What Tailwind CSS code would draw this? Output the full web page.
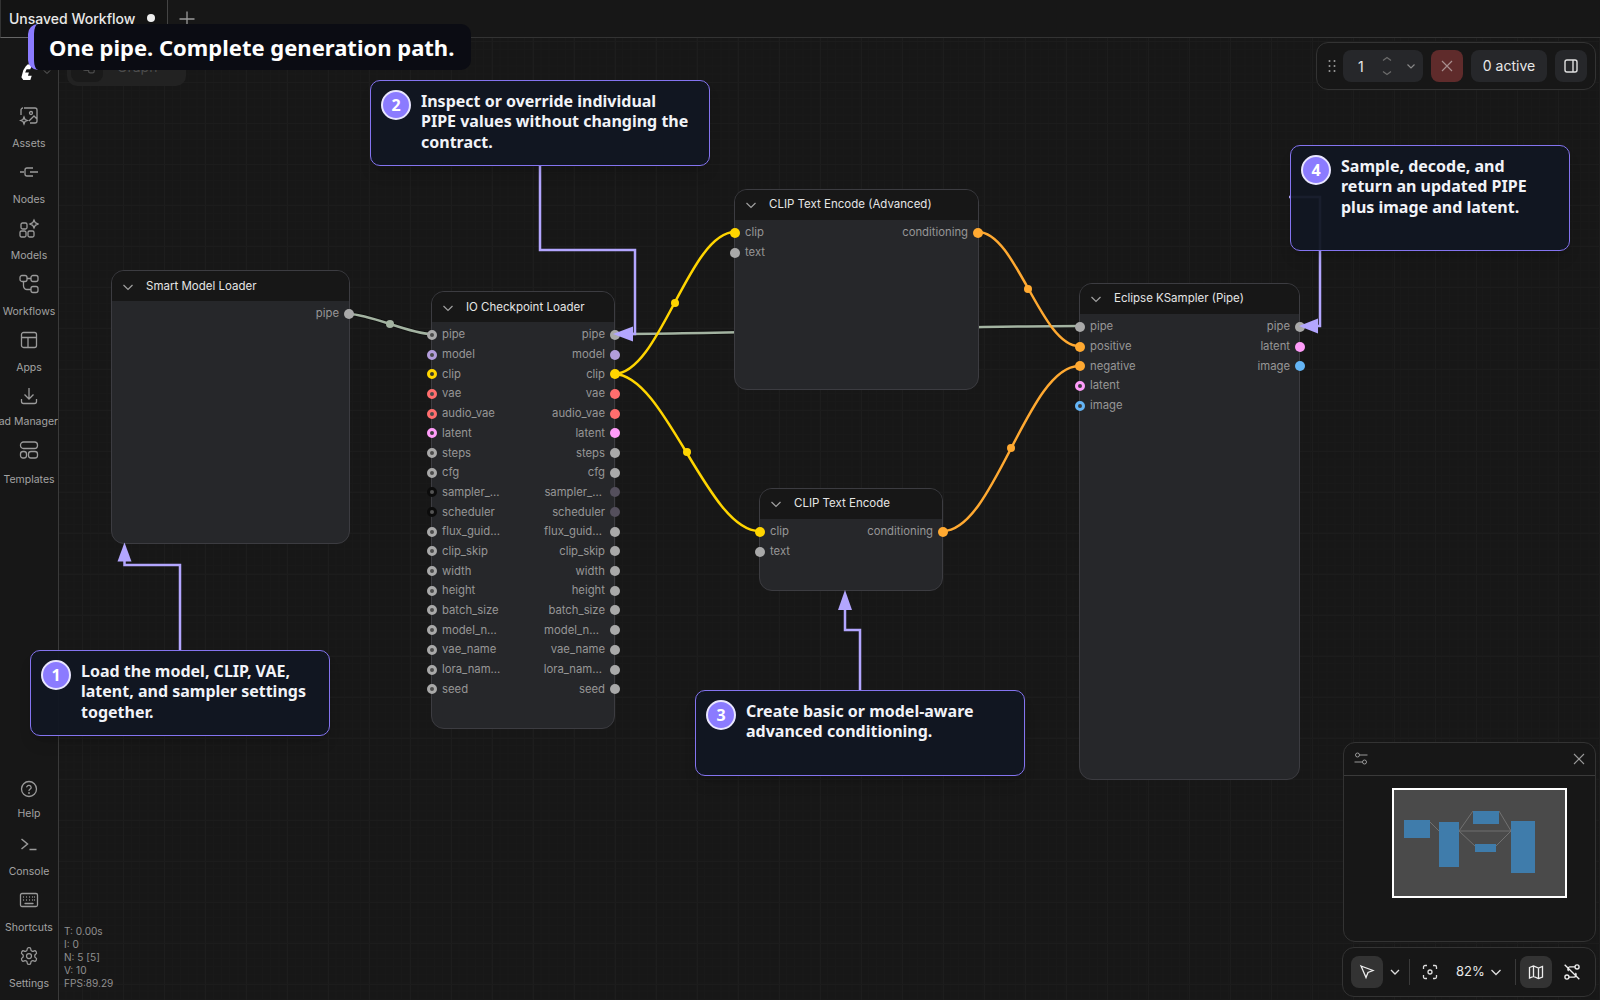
<!DOCTYPE html>
<html lang="en">
<head>
<meta charset="utf-8">
<title>Unsaved Workflow</title>
<script src="https://cdn.jsdelivr.net/npm/@tailwindcss/browser@4"></script>
</head>
<body class="bg-[#171717]">
<div class="relative w-[1600px] h-[1000px] overflow-hidden flex flex-col font-[Inter,sans-serif] text-[#a3a3a3]">

  <!-- canvas: free placement of nodes -->
  <div class="absolute inset-0 bg-[#171717] bg-[linear-gradient(#1c1c1c_1px,transparent_1px),linear-gradient(90deg,#1d1d1d_1px,transparent_1px),linear-gradient(#191919_1px,transparent_1px),linear-gradient(90deg,#191919_1px,transparent_1px)] bg-size-[41px_41px,41px_41px,8.2px_8.2px,8.2px_8.2px]">

    <!-- links -->
    <svg class="absolute inset-0" width="1600" height="1000" fill="none">
      <g stroke="#0b0b0b" stroke-width="4.5" opacity=".6">
        <path d="M349 314C370 314 410 334 431 334"/>
        <path d="M614 334C730 334 963 326 1079 326"/>
      </g>
      <g stroke="#a3b3a1" stroke-width="2.5">
        <path d="M349 314C370 314 410 334 431 334"/>
        <path d="M614 334C730 334 963 326 1079 326"/>
      </g>
      <circle cx="390" cy="324" r="4" fill="#a3b3a1"/>
      <g stroke="#ffd500" stroke-width="2.5">
        <path d="M614 374C660 374 689 232 735 232"/>
        <path d="M614 374C665 374 708 531 759 531"/>
      </g>
      <circle cx="675" cy="303" r="4" fill="#ffd500"/>
      <circle cx="687" cy="452" r="4" fill="#ffd500"/>
      <g stroke="#ffa931" stroke-width="2.5">
        <path d="M978 232C1016 232 1041 346 1079 346"/>
        <path d="M943 531C994 531 1028 366 1079 366"/>
      </g>
      <circle cx="1028" cy="289" r="4" fill="#ffa931"/>
      <circle cx="1011" cy="448" r="4" fill="#ffa931"/>
    </svg>

    <!-- Smart Model Loader -->
    <section class="absolute left-[111px] top-[270px] w-[239px] h-[274px] rounded-[13px] border border-[#3c3c41] bg-[#26272a]">
      <header class="h-[30px] flex items-center gap-[12px] pl-[10px] pt-[1px] rounded-t-[12px] bg-[#171717] text-[11.5px] text-[#e5e5e5]">
        <svg class="size-[12px] text-[#a0a0a0]" viewBox="0 0 12 12" fill="none" stroke="currentColor" stroke-width="1.2"><path d="M1.5 4l4.5 4.5L10.500 4"/></svg>Smart Model Loader</header>
      <div class="pt-[3px] -mx-[5px] text-[11.300px] text-[#969696]">
        <div class="h-[19.700px] flex items-center justify-end gap-[5px]">pipe<i class="size-[10px] rounded-full bg-[#a9a9a9]"></i></div>
      </div>
    </section>

    <!-- IO Checkpoint Loader -->
    <section class="absolute left-[431px] top-[291px] w-[184px] h-[438px] rounded-[13px] border border-[#3c3c41] bg-[#26272a]">
      <header class="h-[30px] flex items-center gap-[12px] pl-[10px] pt-[1px] rounded-t-[12px] bg-[#171717] text-[11.5px] text-[#e5e5e5]">
        <svg class="size-[12px] text-[#a0a0a0]" viewBox="0 0 12 12" fill="none" stroke="currentColor" stroke-width="1.2"><path d="M1.5 4l4.5 4.5L10.500 4"/></svg>IO Checkpoint Loader</header>
      <div class="pt-[3px] -ml-[5px] -mr-[6px] text-[11.300px] text-[#969696]">
        <div class="h-[19.700px] flex items-center gap-[5px]"><i class="size-[10px] rounded-full border-[3px] border-[#a9a9a9] bg-[#4c4c4c]"></i>pipe<span class="ml-auto">pipe</span><i class="size-[10px] rounded-full bg-[#a9a9a9]"></i></div>
        <div class="h-[19.700px] flex items-center gap-[5px]"><i class="size-[10px] rounded-full border-[3px] border-[#b39ddb] bg-[#4c4c4c]"></i>model<span class="ml-auto">model</span><i class="size-[10px] rounded-full bg-[#b39ddb]"></i></div>
        <div class="h-[19.700px] flex items-center gap-[5px]"><i class="size-[10px] rounded-full border-[3px] border-[#ffd500] bg-[#3a3a2a]"></i>clip<span class="ml-auto">clip</span><i class="size-[10px] rounded-full bg-[#ffd500]"></i></div>
        <div class="h-[19.700px] flex items-center gap-[5px]"><i class="size-[10px] rounded-full border-[3px] border-[#ff6e6e] bg-[#4c4c4c]"></i>vae<span class="ml-auto">vae</span><i class="size-[10px] rounded-full bg-[#ff6e6e]"></i></div>
        <div class="h-[19.700px] flex items-center gap-[5px]"><i class="size-[10px] rounded-full border-[3px] border-[#ff6e6e] bg-[#4c4c4c]"></i>audio_vae<span class="ml-auto">audio_vae</span><i class="size-[10px] rounded-full bg-[#ff6e6e]"></i></div>
        <div class="h-[19.700px] flex items-center gap-[5px]"><i class="size-[10px] rounded-full border-[3px] border-[#ff9cf9] bg-[#3c3c3c]"></i>latent<span class="ml-auto">latent</span><i class="size-[10px] rounded-full bg-[#ff9cf9]"></i></div>
        <div class="h-[19.700px] flex items-center gap-[5px]"><i class="size-[10px] rounded-full border-[3px] border-[#a9a9a9] bg-[#4c4c4c]"></i>steps<span class="ml-auto">steps</span><i class="size-[10px] rounded-full bg-[#a9a9a9]"></i></div>
        <div class="h-[19.700px] flex items-center gap-[5px]"><i class="size-[10px] rounded-full border-[3px] border-[#a9a9a9] bg-[#4c4c4c]"></i>cfg<span class="ml-auto">cfg</span><i class="size-[10px] rounded-full bg-[#a9a9a9]"></i></div>
        <div class="h-[19.700px] flex items-center gap-[5px]"><i class="size-[10px] rounded-full border-[3px] border-[#0c0c0c] bg-[#555]"></i>sampler_...<span class="ml-auto pr-[3px]">sampler_...</span><i class="size-[10px] rounded-full bg-[#544f5c]"></i></div>
        <div class="h-[19.700px] flex items-center gap-[5px]"><i class="size-[10px] rounded-full border-[3px] border-[#0c0c0c] bg-[#555]"></i>scheduler<span class="ml-auto">scheduler</span><i class="size-[10px] rounded-full bg-[#544f5c]"></i></div>
        <div class="h-[19.700px] flex items-center gap-[5px]"><i class="size-[10px] rounded-full border-[3px] border-[#a9a9a9] bg-[#4c4c4c]"></i>flux_guid...<span class="ml-auto pr-[3px]">flux_guid...</span><i class="size-[10px] rounded-full bg-[#a9a9a9]"></i></div>
        <div class="h-[19.700px] flex items-center gap-[5px]"><i class="size-[10px] rounded-full border-[3px] border-[#a9a9a9] bg-[#4c4c4c]"></i>clip_skip<span class="ml-auto">clip_skip</span><i class="size-[10px] rounded-full bg-[#a9a9a9]"></i></div>
        <div class="h-[19.700px] flex items-center gap-[5px]"><i class="size-[10px] rounded-full border-[3px] border-[#a9a9a9] bg-[#4c4c4c]"></i>width<span class="ml-auto">width</span><i class="size-[10px] rounded-full bg-[#a9a9a9]"></i></div>
        <div class="h-[19.700px] flex items-center gap-[5px]"><i class="size-[10px] rounded-full border-[3px] border-[#a9a9a9] bg-[#4c4c4c]"></i>height<span class="ml-auto">height</span><i class="size-[10px] rounded-full bg-[#a9a9a9]"></i></div>
        <div class="h-[19.700px] flex items-center gap-[5px]"><i class="size-[10px] rounded-full border-[3px] border-[#a9a9a9] bg-[#4c4c4c]"></i>batch_size<span class="ml-auto">batch_size</span><i class="size-[10px] rounded-full bg-[#a9a9a9]"></i></div>
        <div class="h-[19.700px] flex items-center gap-[5px]"><i class="size-[10px] rounded-full border-[3px] border-[#a9a9a9] bg-[#4c4c4c]"></i>model_n...<span class="ml-auto pr-[6px]">model_n...</span><i class="size-[10px] rounded-full bg-[#a9a9a9]"></i></div>
        <div class="h-[19.700px] flex items-center gap-[5px]"><i class="size-[10px] rounded-full border-[3px] border-[#a9a9a9] bg-[#4c4c4c]"></i>vae_name<span class="ml-auto">vae_name</span><i class="size-[10px] rounded-full bg-[#a9a9a9]"></i></div>
        <div class="h-[19.700px] flex items-center gap-[5px]"><i class="size-[10px] rounded-full border-[3px] border-[#a9a9a9] bg-[#4c4c4c]"></i>lora_nam...<span class="ml-auto pr-[3px]">lora_nam...</span><i class="size-[10px] rounded-full bg-[#a9a9a9]"></i></div>
        <div class="h-[19.700px] flex items-center gap-[5px]"><i class="size-[10px] rounded-full border-[3px] border-[#a9a9a9] bg-[#4c4c4c]"></i>seed<span class="ml-auto">seed</span><i class="size-[10px] rounded-full bg-[#a9a9a9]"></i></div>
      </div>
    </section>

    <!-- CLIP Text Encode (Advanced) -->
    <section class="absolute left-[734px] top-[189px] w-[245px] h-[201px] rounded-[13px] border border-[#3c3c41] bg-[#26272a]">
      <header class="h-[30px] flex items-center gap-[12px] pl-[10px] rounded-t-[12px] bg-[#171717] text-[11.5px] text-[#e5e5e5]">
        <svg class="size-[12px] text-[#a0a0a0]" viewBox="0 0 12 12" fill="none" stroke="currentColor" stroke-width="1.2"><path d="M1.5 4l4.5 4.5L10.500 4"/></svg>CLIP Text Encode (Advanced)</header>
      <div class="pt-[3px] -mx-[5px] text-[11.300px] text-[#969696]">
        <div class="h-[19.700px] flex items-center gap-[5px]"><i class="size-[10px] rounded-full bg-[#ffd500]"></i>clip<span class="ml-auto">conditioning</span><i class="size-[10px] rounded-full bg-[#ffa931]"></i></div>
        <div class="h-[19.700px] flex items-center gap-[5px]"><i class="size-[10px] rounded-full bg-[#a9a9a9]"></i>text</div>
      </div>
    </section>

    <!-- CLIP Text Encode -->
    <section class="absolute left-[759px] top-[488px] w-[184px] h-[103px] rounded-[13px] border border-[#3c3c41] bg-[#26272a]">
      <header class="h-[30px] flex items-center gap-[12px] pl-[10px] rounded-t-[12px] bg-[#171717] text-[11.5px] text-[#e5e5e5]">
        <svg class="size-[12px] text-[#a0a0a0]" viewBox="0 0 12 12" fill="none" stroke="currentColor" stroke-width="1.2"><path d="M1.5 4l4.5 4.5L10.500 4"/></svg>CLIP Text Encode</header>
      <div class="pt-[3px] -ml-[5px] -mr-[6px] text-[11.300px] text-[#969696]">
        <div class="h-[19.700px] flex items-center gap-[5px]"><i class="size-[10px] rounded-full bg-[#ffd500]"></i>clip<span class="ml-auto">conditioning</span><i class="size-[10px] rounded-full bg-[#ffa931]"></i></div>
        <div class="h-[19.700px] flex items-center gap-[5px]"><i class="size-[10px] rounded-full bg-[#a9a9a9]"></i>text</div>
      </div>
    </section>

    <!-- Eclipse KSampler (Pipe) -->
    <section class="absolute left-[1079px] top-[283px] w-[221px] h-[497px] rounded-[13px] border border-[#3c3c41] bg-[#26272a]">
      <header class="h-[30px] flex items-center gap-[12px] pl-[10px] rounded-t-[12px] bg-[#171717] text-[11.5px] text-[#e5e5e5]">
        <svg class="size-[12px] text-[#a0a0a0]" viewBox="0 0 12 12" fill="none" stroke="currentColor" stroke-width="1.2"><path d="M1.5 4l4.5 4.5L10.500 4"/></svg>Eclipse KSampler (Pipe)</header>
      <div class="pt-[3px] -ml-[5px] -mr-[6px] text-[11.300px] text-[#969696]">
        <div class="h-[19.700px] flex items-center gap-[5px]"><i class="size-[10px] rounded-full bg-[#a9a9a9]"></i>pipe<span class="ml-auto">pipe</span><i class="size-[10px] rounded-full bg-[#a9a9a9]"></i></div>
        <div class="h-[19.700px] flex items-center gap-[5px]"><i class="size-[10px] rounded-full bg-[#ffa931]"></i>positive<span class="ml-auto">latent</span><i class="size-[10px] rounded-full bg-[#ff9cf9]"></i></div>
        <div class="h-[19.700px] flex items-center gap-[5px]"><i class="size-[10px] rounded-full bg-[#ffa931]"></i>negative<span class="ml-auto">image</span><i class="size-[10px] rounded-full bg-[#64b5f6]"></i></div>
        <div class="h-[19.700px] flex items-center gap-[5px]"><i class="size-[10px] rounded-full border-[3px] border-[#ff9cf9] bg-[#3c3c3c]"></i>latent</div>
        <div class="h-[19.700px] flex items-center gap-[5px]"><i class="size-[10px] rounded-full border-[3px] border-[#64b5f6] bg-[#3c3c3c]"></i>image</div>
      </div>
    </section>

    <!-- callout arrows -->
    <svg class="absolute inset-0" width="1600" height="1000" fill="none">
      <g stroke="#b3a6ff" stroke-width="2.5">
        <path d="M180 650V565H124.500V555"/>
        <path d="M540 165V250H635V334H625"/>
        <path d="M860 690V630H845V605"/>
        <path d="M1289 197H1320V326H1310"/>
      </g>
      <g fill="#b3a6ff">
        <path d="M124.500 542.500l7 19h-14z"/>
        <path d="M613 334l20-7.500v15z"/>
        <path d="M845 590l7 20h-14z"/>
        <path d="M1299 326l19-7.500v15z"/>
      </g>
    </svg>
  </div>

  <!-- tab bar -->
  <nav class="relative h-[38px] shrink-0 flex items-center border-b border-[#333] bg-[#171717]">
    <div class="h-[38px] w-[168px] flex items-center pl-[8px] border-x border-b border-r-[#444] border-l-[#333] border-b-[#666] bg-[#141414] text-[14px] font-medium text-[#e8e8e8]">
      <span>Unsaved Workflow</span><i class="ml-[12px] size-[8px] rounded-full bg-[#eee]"></i>
    </div>
    <svg class="ml-[10px] text-[#9a9a9a]" width="18" height="18" viewBox="0 0 18 18" fill="none" stroke="currentColor" stroke-width="1.3"><path d="M9 1.500v15M1.500 9h15"/></svg>
  </nav>

  <div class="relative flex-1 flex min-h-0">
    <!-- sidebar -->
    <aside class="w-[59px] shrink-0 flex flex-col justify-between border-r border-[#3a3a3a] bg-[#171717] text-[10.500px] overflow-hidden">
      <div class="flex flex-col pt-[18px]">
        <div class="h-[31px] flex items-center gap-[8px] pl-[20px]">
          <svg width="15" height="18" viewBox="0 0 16 18"><path fill="#fff" d="M8 1L13 0.500L11 6H7L5.500 9.500H9.500L8.500 13H12.500L11 17.500H3.500L1.500 14.500L3.500 7L6 3z"/></svg>
          <svg class="text-[#666]" width="8" height="8" viewBox="0 0 8 8" fill="none" stroke="currentColor"><path d="M1 2.500l3 3 3-3"/></svg>
        </div>
        <div class="mt-[9px] h-[56px] flex flex-col items-center pt-[10px] gap-[10px] whitespace-nowrap">
          <svg width="20" height="20" viewBox="0 0 20 20" fill="none" stroke="#9a9a9a" stroke-width="1.300"><path d="M5 2h11a2 2 0 0 1 2 2v11a2 2 0 0 1-2 2h-5M2 9V4a2 2 0 0 1 2-2M18 13l-3-3-5 5"/><circle cx="12" cy="7" r="1.500"/><path d="M5 11l1 2.500 2.500 1-2.500 1L5 18l-1-2.500-2.500-1 2.500-1z"/></svg>
          <span>Assets</span>
        </div>
        <div class="h-[56px] flex flex-col items-center pt-[10px] gap-[10px] whitespace-nowrap">
          <svg width="20" height="20" viewBox="0 0 20 20" fill="none" stroke="#9a9a9a" stroke-width="1.300"><path d="M1 10h4M14 6H8a2 2 0 0 0-2 2v4a2 2 0 0 0 2 2h6M11 10h8"/></svg>
          <span>Nodes</span>
        </div>
        <div class="h-[56px] flex flex-col items-center pt-[10px] gap-[10px] whitespace-nowrap">
          <svg width="20" height="20" viewBox="0 0 20 20" fill="none" stroke="#9a9a9a" stroke-width="1.300"><rect x="2" y="5" width="6" height="6" rx="1.500"/><rect x="1" y="13" width="6" height="6" rx="1.500"/><rect x="9" y="13" width="6" height="6" rx="1.500"/><path d="M15 2l1.300 2.700L19 6l-2.700 1.300L15 10l-1.300-2.700L11 6l2.700-1.300z"/></svg>
          <span>Models</span>
        </div>
        <div class="h-[56px] flex flex-col items-center pt-[10px] gap-[10px] whitespace-nowrap">
          <svg width="20" height="20" viewBox="0 0 20 20" fill="none" stroke="#9a9a9a" stroke-width="1.300"><rect x="1" y="1.500" width="7" height="6" rx="2"/><rect x="12" y="1.500" width="7" height="6" rx="2"/><rect x="12" y="12.500" width="7" height="6" rx="2"/><path d="M8 4.500h4M4.500 7.500V12a3.500 3.500 0 0 0 3.500 3.500h4"/></svg>
          <span>Workflows</span>
        </div>
        <div class="h-[56px] flex flex-col items-center pt-[10px] gap-[10px] whitespace-nowrap">
          <svg width="20" height="20" viewBox="0 0 20 20" fill="none" stroke="#9a9a9a" stroke-width="1.300"><rect x="2.500" y="2.500" width="15" height="15" rx="2"/><path d="M2.500 7.500h15M9 7.500v10"/></svg>
          <span>Apps</span>
        </div>
        <div class="h-[56px] flex flex-col items-center pt-[10px] gap-[8px] whitespace-nowrap">
          <svg width="20" height="20" viewBox="0 0 20 20" fill="none" stroke="#9a9a9a" stroke-width="1.300"><path d="M10 2v11M5.500 8.500L10 13l4.500-4.500M2.500 13v2.500a2 2 0 0 0 2 2h11a2 2 0 0 0 2-2V13"/></svg>
          <span class="w-full flex justify-end overflow-hidden"><span class="shrink-0">Download Manager</span></span>
        </div>
        <div class="h-[56px] flex flex-col items-center pt-[8px] gap-[12px] whitespace-nowrap">
          <svg width="20" height="20" viewBox="0 0 20 20" fill="none" stroke="#9a9a9a" stroke-width="1.300"><rect x="1.500" y="2" width="17" height="6.500" rx="3"/><rect x="1.500" y="11.500" width="6" height="6.500" rx="2.500"/><rect x="9.500" y="11.500" width="9" height="6.500" rx="2.500"/></svg>
          <span>Templates</span>
        </div>
      </div>
      <div class="flex flex-col pb-[8px]">
        <div class="h-[56px] flex flex-col items-center pt-[11px] gap-[7px] whitespace-nowrap">
          <svg width="20" height="20" viewBox="0 0 20 20" fill="none" stroke="#9a9a9a" stroke-width="1.300" stroke-linecap="round"><circle cx="10" cy="10" r="7.500"/><path d="M7.800 7.800a2.300 2.300 0 0 1 4.400.7c0 1.500-2.200 2-2.200 3"/><path d="M10 14h.01" stroke-width="1.800"/></svg>
          <span>Help</span>
        </div>
        <div class="h-[56px] flex flex-col items-center pt-[10px] gap-[10px] whitespace-nowrap">
          <svg width="20" height="20" viewBox="0 0 20 20" fill="none" stroke="#9a9a9a" stroke-width="1.500"><path d="M2.500 5l6 5-6 5M10.500 15.500h7"/></svg>
          <span>Console</span>
        </div>
        <div class="h-[56px] flex flex-col items-center pt-[10px] gap-[10px] whitespace-nowrap">
          <svg width="20" height="20" viewBox="0 0 20 20" fill="none" stroke="#9a9a9a" stroke-width="1.300" stroke-linecap="round"><rect x="1.500" y="3.500" width="17" height="13" rx="1.500"/><path d="M4.500 7h.01M7.500 7h.01M10.500 7h.01M13.500 7h.01M15.500 7h.01M4.500 10h.01M7.500 10h.01M10.500 10h.01M13.500 10h.01M15.500 10h.01M6 13.500h8"/></svg>
          <span>Shortcuts</span>
        </div>
        <div class="h-[56px] flex flex-col items-center pt-[10px] gap-[10px] whitespace-nowrap">
          <svg width="20" height="20" viewBox="0 0 24 24" fill="none" stroke="#9a9a9a" stroke-width="1.500"><path d="M12.220 2h-.44a2 2 0 0 0-2 2v.18a2 2 0 0 1-1 1.730l-.43.250a2 2 0 0 1-2 0l-.15-.08a2 2 0 0 0-2.730.730l-.22.380a2 2 0 0 0 .730 2.730l.15.100a2 2 0 0 1 1 1.720v.510a2 2 0 0 1-1 1.740l-.15.090a2 2 0 0 0-.730 2.730l.22.380a2 2 0 0 0 2.730.730l.15-.08a2 2 0 0 1 2 0l.43.250a2 2 0 0 1 1 1.730V20a2 2 0 0 0 2 2h.44a2 2 0 0 0 2-2v-.18a2 2 0 0 1 1-1.730l.43-.250a2 2 0 0 1 2 0l.15.080a2 2 0 0 0 2.730-.730l.22-.390a2 2 0 0 0-.730-2.730l-.15-.080a2 2 0 0 1-1-1.740v-.500a2 2 0 0 1 1-1.740l.15-.090a2 2 0 0 0 .730-2.730l-.22-.380a2 2 0 0 0-2.730-.730l-.15.080a2 2 0 0 1-2 0l-.43-.250a2 2 0 0 1-1-1.730V4a2 2 0 0 0-2-2z"/><circle cx="12" cy="12" r="3"/></svg>
          <span>Settings</span>
        </div>
      </div>
    </aside>

    <!-- graph pill, behind the banner -->
    <div class="absolute left-[67px] top-[8px] w-[119px] h-[40px] rounded-[10px] bg-[#222] flex items-center pl-[4px] text-[14px] text-[#4c4c4c]">
      <span class="size-[32px] rounded-[8px] bg-[#1a1a1a] flex items-center justify-center">
        <svg width="16" height="16" viewBox="0 0 20 20" fill="none" stroke="#4c4c4c" stroke-width="1.500"><rect x="1" y="1.500" width="7" height="6" rx="2"/><rect x="12" y="1.500" width="7" height="6" rx="2"/><rect x="12" y="12.500" width="7" height="6" rx="2"/><path d="M4.500 7.500V12a3.500 3.500 0 0 0 3.500 3.500h4"/></svg>
      </span>
      <span class="ml-[14px]">Graph</span>
      <svg class="ml-[8px]" width="10" height="10" viewBox="0 0 10 10" fill="none" stroke="#333"><path d="M1 3l4 4 4-4"/></svg>
    </div>

    <!-- run toolbar -->
    <div class="absolute right-[4px] top-[4px] w-[280px] h-[48px] flex items-center gap-[8px] pl-[11px] rounded-[12px] border border-[#333] bg-[#171717]">
      <svg class="shrink-0 -mr-[1px] text-[#999]" width="8" height="14" viewBox="0 0 8 14" fill="currentColor"><circle cx="1.500" cy="2" r="1"/><circle cx="6.500" cy="2" r="1"/><circle cx="1.500" cy="7" r="1"/><circle cx="6.500" cy="7" r="1"/><circle cx="1.500" cy="12" r="1"/><circle cx="6.500" cy="12" r="1"/></svg>
      <div class="h-[32px] w-[80px] shrink-0 flex items-center rounded-[8px] bg-[#26272a] pl-[15px] text-[14px] text-[#e8e8e8]">
        <span>1</span>
        <svg class="ml-[18px]" width="10" height="20" viewBox="0 0 10 20" fill="none" stroke="#6c6c6c" stroke-width="1.200"><path d="M1 4.500l4-3 4 3M1 15.500l4 3 4-3"/></svg>
        <svg class="ml-[14px]" width="10" height="10" viewBox="0 0 10 10" fill="none" stroke="#888" stroke-width="1.200"><path d="M1.500 3.500L5 7l3.500-3.500"/></svg>
      </div>
      <button class="size-[32px] shrink-0 flex items-center justify-center rounded-[8px] bg-[#5f2b2b]"><svg width="12" height="12" viewBox="0 0 12 12" fill="none" stroke="#a88e8e" stroke-width="1.200"><path d="M1 1l10 10M11 1L1 11"/></svg></button>
      <button class="h-[32px] w-[76px] shrink-0 rounded-[8px] bg-[#26272a] text-[14px] leading-[30px] text-[#e8e8e8]">0 active</button>
      <button class="size-[32px] shrink-0 flex items-center justify-center rounded-[8px] bg-[#26272a]"><svg width="16" height="16" viewBox="0 0 16 16" fill="none" stroke="#e0e0e0" stroke-width="1.400"><rect x="2" y="2" width="12" height="12" rx="2"/><path d="M10 2v12"/></svg></button>
    </div>

    <!-- stats -->
    <div class="absolute left-[64px] bottom-[10px] text-[10.100px] leading-[13px] text-[#8f8f8f]">
      <p>T: 0.00s</p><p>I: 0</p><p>N: 5 [5]</p><p>V: 10</p><p>FPS:89.29</p>
    </div>

    <!-- minimap -->
    <div class="absolute right-[4px] top-[704px] w-[253px] h-[200px] rounded-[12px] border border-[#333] bg-[#171717]">
      <div class="h-[33px] flex items-center justify-between px-[10px] border-b border-[#3a3a3a]">
        <svg width="14" height="14" viewBox="0 0 14 14" fill="none" stroke="#999" stroke-width="1"><circle cx="3.500" cy="3" r="2"/><path d="M5.500 3h8M.5 10h8"/><circle cx="10.500" cy="10" r="2"/></svg>
        <svg width="12" height="12" viewBox="0 0 12 12" fill="none" stroke="#999" stroke-width="1.100"><path d="M1 1l10 10M11 1L1 11"/></svg>
      </div>
      <svg class="absolute left-[48px] top-[45px]" width="175" height="110" viewBox="0 0 175 110">
        <rect x="1" y="1" width="173" height="108" fill="#4a4a4a" stroke="#fff" stroke-width="2"/>
        <g transform="translate(0 1)">
          <g stroke="#7a7a7a" stroke-width=".8" fill="none"><path d="M38 33l9 9M67 42l14-20M67 42l16 15M67 42h52M107 22l12 20M104 57l15-15"/></g>
          <g fill="#3f7cab"><rect x="12" y="31" width="26" height="18"/><rect x="47" y="33" width="20" height="45"/><rect x="81" y="22" width="26" height="13"/><rect x="83" y="55" width="21" height="8"/><rect x="119" y="32" width="24" height="52"/></g>
        </g>
      </svg>
    </div>

    <!-- canvas controls -->
    <div class="absolute right-[4px] top-[909px] w-[254px] h-[50px] flex items-center pl-[8px] rounded-[12px] border border-[#333] bg-[#171717] text-[13px] text-[#e8e8e8]">
      <span class="size-[32px] rounded-[8px] bg-[#333] flex items-center justify-center"><svg width="16" height="16" viewBox="0 0 16 16" fill="none" stroke="#eee" stroke-width="1.300"><path d="M2 2l12 4.500-5 2-2 5z"/></svg></span>
      <svg class="ml-[7px]" width="10" height="10" viewBox="0 0 10 10" fill="none" stroke="#ddd" stroke-width="1.300"><path d="M1 3l4 4 4-4"/></svg>
      <i class="ml-[9px] w-px h-[26px] bg-[#3a3a3a]"></i>
      <svg class="ml-[12px]" width="16" height="16" viewBox="0 0 16 16" fill="none" stroke="#ddd" stroke-width="1.300"><path d="M1.500 5V3a1.500 1.500 0 0 1 1.500-1.500h2M11 1.500h2A1.500 1.500 0 0 1 14.500 3v2M14.500 11v2a1.500 1.500 0 0 1-1.500 1.500h-2M5 14.500H3A1.500 1.500 0 0 1 1.500 13v-2"/><circle cx="8" cy="8" r="2"/></svg>
      <span class="ml-[18px]">82%</span>
      <svg class="ml-[5px]" width="12" height="12" viewBox="0 0 12 12" fill="none" stroke="#ddd" stroke-width="1.300"><path d="M1.500 4L6 8.500 10.500 4"/></svg>
      <i class="ml-[13px] w-px h-[26px] bg-[#3a3a3a]"></i>
      <span class="ml-[4px] size-[32px] rounded-[8px] bg-[#333] flex items-center justify-center"><svg width="16" height="16" viewBox="0 0 16 16" fill="none" stroke="#eee" stroke-width="1.300"><path d="M1.500 3.500l4-1.500 5 2 4-1.500v10.500l-4 1.500-5-2-4 1.500zM5.500 2v10.500M10.500 4v10.500"/></svg></span>
      <svg class="ml-[11px]" width="18" height="18" viewBox="0 0 16 16" fill="none" stroke="#eee" stroke-width="1.200"><circle cx="3.500" cy="12.500" r="1.800"/><circle cx="12.500" cy="3.500" r="1.800"/><path d="M1.500 1.500l13 13M5.300 12.500H10a2 2 0 0 0 1-3.500M10.700 3.500H6a2 2 0 0 0-1 3.500"/></svg>
    </div>
  </div>

  <!-- callouts -->
  <article class="absolute left-[30px] top-[650px] w-[300px] h-[86px] flex gap-[10px] p-[10px] rounded-[10px] border border-[#8474f0] bg-[#111622]/95 shadow-lg font-['Noto_Sans',sans-serif] font-bold text-[16px] leading-[20.400px] text-[#f1f3f8]">
    <span class="shrink-0 size-[30px] -mt-[1px] rounded-full border-2 border-[#e9e6ff] bg-[#8b7bff] flex items-center justify-center text-white">1</span>
    <p>Load the model, CLIP, VAE, latent, and sampler settings together.</p>
  </article>
  <article class="absolute left-[370px] top-[80px] w-[340px] h-[86px] flex gap-[10px] p-[10px] rounded-[10px] border border-[#8474f0] bg-[#111622]/95 shadow-lg font-['Noto_Sans',sans-serif] font-bold text-[16px] leading-[20.400px] text-[#f1f3f8]">
    <span class="shrink-0 size-[30px] -mt-[1px] rounded-full border-2 border-[#e9e6ff] bg-[#8b7bff] flex items-center justify-center text-white">2</span>
    <p class="w-[272px]">Inspect or override individual PIPE values without changing the contract.</p>
  </article>
  <article class="absolute left-[695px] top-[690px] w-[330px] h-[86px] flex gap-[10px] p-[10px] rounded-[10px] border border-[#8474f0] bg-[#111622]/95 shadow-lg font-['Noto_Sans',sans-serif] font-bold text-[16px] leading-[20.400px] text-[#f1f3f8]">
    <span class="shrink-0 size-[30px] -mt-[1px] rounded-full border-2 border-[#e9e6ff] bg-[#8b7bff] flex items-center justify-center text-white">3</span>
    <p>Create basic or model-aware advanced conditioning.</p>
  </article>
  <article class="absolute left-[1290px] top-[145px] w-[280px] h-[106px] flex gap-[10px] p-[10px] rounded-[10px] border border-[#8474f0] bg-[#111622]/95 shadow-lg font-['Noto_Sans',sans-serif] font-bold text-[16px] leading-[20.400px] text-[#f1f3f8]">
    <span class="shrink-0 size-[30px] -mt-[1px] rounded-full border-2 border-[#e9e6ff] bg-[#8b7bff] flex items-center justify-center text-white">4</span>
    <p>Sample, decode, and return an updated PIPE plus image and latent.</p>
  </article>

  <!-- banner -->
  <div class="absolute left-[28px] top-[24px] w-[443px] h-[46px] flex items-center pl-[15px] rounded-[10px] border-l-[6px] border-[#8b7bff] bg-[#0b0c13] font-['Noto_Sans',sans-serif] font-bold text-[22px] text-white">One pipe. Complete generation path.</div>
</div>
</body>
</html>
